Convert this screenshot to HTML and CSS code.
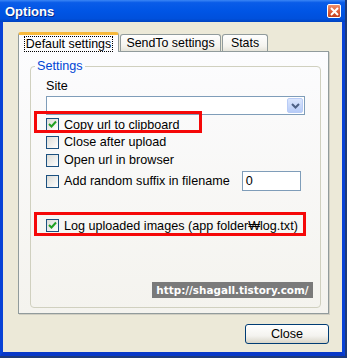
FILE: index.html
```html
<!DOCTYPE html>
<html lang="en">
<head>
    <meta charset="UTF-8">
    <title>Options</title>
    <link rel="stylesheet" href="styles.css">
</head>
<body>
    <div class="window">
        <div class="titlebar">
            <span class="title">Options</span>
            <span class="close-x">
                <svg width="9" height="9" viewBox="0 0 9 9"><path d="M1 1 L8 8 M8 1 L1 8" stroke="#fff" stroke-width="2"/></svg>
            </span>
        </div>

        <div class="client">
            <div class="tabs">
                <div class="tab active"><span class="focus">Default settings</span></div>
                <div class="tab second">SendTo settings</div>
                <div class="tab third">Stats</div>
            </div>

            <div class="panel">
                <fieldset class="group">
                    <legend>Settings</legend>
                    <div class="label">Site</div>
                    <div class="combo">
                        <span class="combo-btn">
                            <svg width="9" height="6" viewBox="0 0 9 6"><path d="M1 1 L4.5 4.5 L8 1" fill="none" stroke="#4d6185" stroke-width="2"/></svg>
                        </span>
                    </div>

                    <div class="row r1 marked">
                        <span class="check on"><svg width="9" height="9" viewBox="0 0 9 9"><path d="M1 4 L3.5 6.5 L8 1.5" fill="none" stroke="#21a121" stroke-width="2"/></svg></span>
                        <span>Copy url to clipboard</span>
                    </div>
                    <div class="row">
                        <span class="check"></span>
                        <span>Close after upload</span>
                    </div>
                    <div class="row">
                        <span class="check"></span>
                        <span>Open url in browser</span>
                    </div>
                    <div class="row r4">
                        <span class="check"></span>
                        <span>Add random suffix in filename</span>
                        <span class="edit">0</span>
                    </div>
                    <div class="row r5 marked wide">
                        <span class="check on"><svg width="9" height="9" viewBox="0 0 9 9"><path d="M1 4 L3.5 6.5 L8 1.5" fill="none" stroke="#21a121" stroke-width="2"/></svg></span>
                        <span>Log uploaded images (app folder₩log.txt)</span>
                    </div>
                </fieldset>
            </div>

            <div class="buttons">
                <button class="btn">Close</button>
            </div>
        </div>

        <div class="watermark">http://shagall.tistory.com/</div>
    </div>
</body>
</html>
```

FILE: styles.css
```css
*, *::before, *::after {
    margin: 0;
    padding: 0;
    box-sizing: border-box;
    font-family: "Liberation Sans", Arial, sans-serif;
}

body {
    background-color: #1d3a7a;
    color: #000;
    width: 347px;
    height: 358px;
    overflow: hidden;
}

.window {
    position: relative;
    width: 345px;
    height: 356px;
    display: flex;
    flex-direction: column;
    background: #0a4fdc;
    border-left: 3px solid #0842d6;
    border-right: 3px solid #0842d6;
    border-bottom: 4px solid #0838c8;
}

.titlebar {
    height: 22px;
    margin: 0 -3px;
    padding: 0 5px;
    display: flex;
    align-items: center;
    justify-content: space-between;
    background: linear-gradient(to bottom, #3b86f5 0%, #0a5ce8 12%, #0055e5 50%, #0050dc 85%, #0043c0 100%);
}

.title {
    color: #fff;
    font-weight: bold;
    font-size: 13px;
    text-shadow: 1px 1px 0 #0a2a8a;
}

.close-x {
    width: 14px;
    height: 14px;
    margin-right: -1px;
    display: flex;
    align-items: center;
    justify-content: center;
    border: 1px solid #fff;
    border-radius: 2px;
    background: linear-gradient(to bottom, #f0906c, #dc5a34 60%, #c2401e);
}

.client {
    flex: 1;
    background-color: #ece9d8;
    padding: 10px 13px 0 15px;
}

.tabs {
    display: flex;
    align-items: flex-end;
    height: 19px;
    font-size: 12.4px;
}

.tab {
    height: 17px;
    display: flex;
    align-items: center;
    justify-content: center;
    border: 1px solid #919b9c;
    border-bottom: none;
    border-radius: 3px 3px 0 0;
    background: linear-gradient(to bottom, #fefefe, #f4f3ee 70%, #e6e4da);
}

.tab.active {
    width: 101px;
    height: 20px;
    margin-bottom: -1px;
    position: relative;
    z-index: 1;
    border-top: 3px solid #f7b93c;
    background: #fcfcfe;
}

.tab.second {
    width: 101px;
    margin-left: 1px;
}

.tab.third {
    width: 46px;
    margin-left: 1px;
}

.focus {
    padding: 0 1px;
    line-height: 14px;
    outline: 1px dotted #000;
}

.panel {
    width: 311px;
    height: 263px;
    display: flex;
    flex-direction: column;
    padding: 7px 7px 5px 11px;
    border: 1px solid #919b9c;
    box-shadow: 1px 1px 0 #d0cec2;
    background: linear-gradient(to bottom, #fcfcfe, #f4f3ee);
}

.group {
    flex: 1;
    border: 1px solid #d0d0bf;
    border-radius: 4px;
    padding: 5px 0 0 15px;
    font-size: 12.6px;
}

.group legend {
    margin-left: -11px;
    padding: 0 2px;
    color: #0046d5;
    line-height: 15px;
}

.label {
    line-height: 15px;
    margin-bottom: 2px;
}

.combo {
    width: 259px;
    height: 19px;
    display: flex;
    justify-content: flex-end;
    padding: 1px;
    border: 1px solid #7f9db9;
    background: #fff;
}

.combo-btn {
    width: 16px;
    display: flex;
    align-items: center;
    justify-content: center;
    border: 1px solid #b9ccf6;
    border-radius: 2px;
    background: linear-gradient(to bottom, #dbe6fd, #b7ccf8);
}

.row {
    position: relative;
    height: 18px;
    display: flex;
    align-items: center;
}

.row.r1 {
    height: 17px;
    margin-top: 1px;
}

.row.r4 {
    height: 20px;
    margin-top: 2px;
}

.row.r5 {
    height: 17px;
    margin-top: 26px;
}

.check {
    width: 13px;
    height: 13px;
    margin-right: 5px;
    display: flex;
    align-items: center;
    justify-content: center;
    border: 1px solid #1c5180;
    background: linear-gradient(135deg, #dcdcd7, #fff);
}

.edit {
    width: 59px;
    height: 20px;
    margin-left: 12px;
    padding-left: 3px;
    line-height: 18px;
    border: 1px solid #7f9db9;
    background: #fff;
}

.marked::after {
    content: "";
    position: absolute;
    top: -5px;
    left: -12px;
    width: 168px;
    height: 22px;
    border: 3px solid #f50808;
}

.marked.wide::after {
    width: 272px;
    height: 24px;
}

.buttons {
    display: flex;
    justify-content: flex-end;
    margin-top: 10px;
}

.btn {
    width: 84px;
    height: 20px;
    font-size: 12.6px;
    border: 1px solid #003c74;
    border-radius: 3px;
    background: linear-gradient(to bottom, #fff, #f4f3ef 60%, #d8d5c8);
}

.watermark {
    position: absolute;
    left: 149px;
    top: 282px;
    width: 161px;
    height: 16px;
    background: #7a7a7a;
    color: #fff;
    font-family: "DejaVu Sans", sans-serif;
    font-weight: bold;
    font-size: 10.4px;
    line-height: 16px;
    text-align: center;
}
```
